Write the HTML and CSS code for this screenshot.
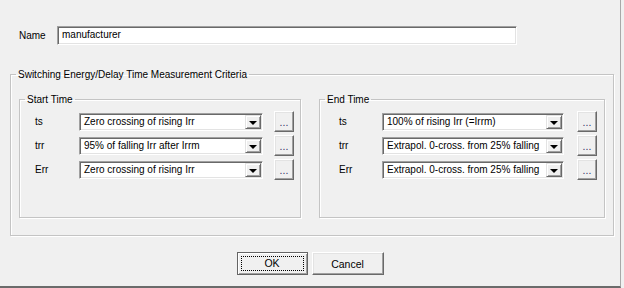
FILE: index.html
```html
<!DOCTYPE html>
<html lang="en">
<head>
    <title>Switching Energy Criteria</title>
    <link rel="stylesheet" href="styles.css">
</head>
<body>
    <div class="dialog">
        <div class="name-row">
            <label class="name-label">Name</label>
            <div class="textbox">manufacturer</div>
        </div>
        <fieldset class="group outer">
            <legend>Switching Energy/Delay Time Measurement Criteria</legend>
            <div class="columns">
                <fieldset class="group inner start">
                    <legend>Start Time</legend>
                    <div class="rows">
                        <div class="row">
                            <span class="row-label">ts</span>
                            <div class="combo"><span class="combo-text">Zero crossing of rising Irr</span><span class="drop"></span></div>
                            <button class="more">...</button>
                        </div>
                        <div class="row">
                            <span class="row-label">trr</span>
                            <div class="combo"><span class="combo-text">95% of falling Irr after Irrm</span><span class="drop"></span></div>
                            <button class="more">...</button>
                        </div>
                        <div class="row">
                            <span class="row-label">Err</span>
                            <div class="combo"><span class="combo-text">Zero crossing of rising Irr</span><span class="drop"></span></div>
                            <button class="more">...</button>
                        </div>
                    </div>
                </fieldset>
                <fieldset class="group inner end">
                    <legend>End Time</legend>
                    <div class="rows">
                        <div class="row">
                            <span class="row-label">ts</span>
                            <div class="combo"><span class="combo-text">100% of rising Irr (=Irrm)</span><span class="drop"></span></div>
                            <button class="more">...</button>
                        </div>
                        <div class="row">
                            <span class="row-label">trr</span>
                            <div class="combo"><span class="combo-text">Extrapol. 0-cross. from 25% falling</span><span class="drop"></span></div>
                            <button class="more">...</button>
                        </div>
                        <div class="row">
                            <span class="row-label">Err</span>
                            <div class="combo"><span class="combo-text">Extrapol. 0-cross. from 25% falling</span><span class="drop"></span></div>
                            <button class="more">...</button>
                        </div>
                    </div>
                </fieldset>
            </div>
        </fieldset>
        <div class="buttons">
            <button class="btn default"><span class="focus">OK</span></button>
            <button class="btn">Cancel</button>
        </div>
    </div>
</body>
</html>
```

FILE: styles.css
```css
body {
    margin: 0;
    background-color: #f0f0f0;
    font-family: "Liberation Sans", Arial, sans-serif;
    font-size: 10px;
    color: #000;
}
.dialog {
    box-sizing: border-box;
    width: 621px;
    height: 288px;
    border-right: 1px solid #a8a8a8;
    border-bottom: 2px solid #6b6b6b;
    padding-top: 26px;
}
.name-row {
    display: flex;
    align-items: center;
    margin-left: 19px;
    height: 19px;
}
.name-label {
    width: 38px;
}
.textbox {
    box-sizing: border-box;
    width: 460px;
    height: 19px;
    line-height: 16px;
    padding-left: 4px;
    background-color: #fff;
    border: 1px solid;
    border-color: #a0a0a0 #fff #fff #a0a0a0;
    box-shadow: inset 1px 1px #696969, inset -1px -1px #e3e3e3;
}
.group {
    margin: 0;
    padding: 0;
    border: 1px solid #c4c4c4;
    box-shadow: inset 1px 1px #fff, 1px 1px #fff;
    min-width: 0;
}
.group > legend {
    padding: 0 2px;
    margin-left: 5px;
    line-height: 13px;
}
.outer {
    box-sizing: border-box;
    width: 604px;
    margin: 23px 0 0 10px;
}
.columns {
    display: flex;
    gap: 18px;
    padding: 12px 7px 17px 8px;
}
.inner {
    box-sizing: border-box;
}
.rows {
    padding: 5px 0 37px 15px;
}
.inner.start {
    width: 282px;
}
.inner.end {
    width: 286px;
}
.end .rows {
    padding-left: 19px;
}
.row {
    display: flex;
    align-items: center;
    height: 21px;
    margin-bottom: 3px;
}
.row:last-child {
    margin-bottom: 0;
}
.row-label {
    width: 44px;
}
.end .row-label {
    width: 43px;
}
.combo {
    box-sizing: border-box;
    display: flex;
    width: 184px;
    height: 18px;
    background-color: #fff;
    border: 1px solid;
    border-color: #a0a0a0 #fff #fff #a0a0a0;
    box-shadow: inset 1px 1px #696969, inset -1px -1px #e3e3e3;
    padding: 1px 1px 1px 2px;
}
.end .combo {
    width: 182px;
}
.combo-text {
    flex: 1;
    overflow: hidden;
    white-space: nowrap;
    line-height: 14px;
    padding-left: 2px;
}
.drop {
    box-sizing: border-box;
    position: relative;
    width: 16px;
    background-color: #f0f0f0;
    border: 1px solid;
    border-color: #e3e3e3 #696969 #696969 #e3e3e3;
    box-shadow: inset 1px 1px #fff, inset -1px -1px #a0a0a0;
}
.drop::after {
    content: "";
    position: absolute;
    left: 3px;
    top: 5px;
    border-left: 4px solid transparent;
    border-right: 4px solid transparent;
    border-top: 4px solid #000;
}
.more, .btn {
    box-sizing: border-box;
    font-family: inherit;
    font-size: 10.5px;
    color: #000;
    background-color: #f0f0f0;
    border: 1px solid;
    border-color: #fff #696969 #696969 #fff;
    box-shadow: inset -1px -1px #a0a0a0, inset 1px 1px #e3e3e3;
    padding: 0;
    border-radius: 0;
}
.more {
    width: 20px;
    height: 21px;
    margin-left: 11px;
    line-height: 17px;
    padding-top: 2px;
    color: #333366;
}
.end .more {
    margin-left: 13px;
}
.buttons {
    display: flex;
    justify-content: center;
    gap: 4px;
    margin-top: 16px;
}
.btn {
    width: 72px;
    height: 23px;
}
.btn.default {
    width: 71px;
    border: 1px solid #646464;
    box-shadow: inset 1px 1px #fff, inset -1px -1px #a0a0a0;
    padding: 3px;
}
.focus {
    display: block;
    height: 100%;
    line-height: 13px;
    border: 1px dotted #000;
    box-sizing: border-box;
}
```
